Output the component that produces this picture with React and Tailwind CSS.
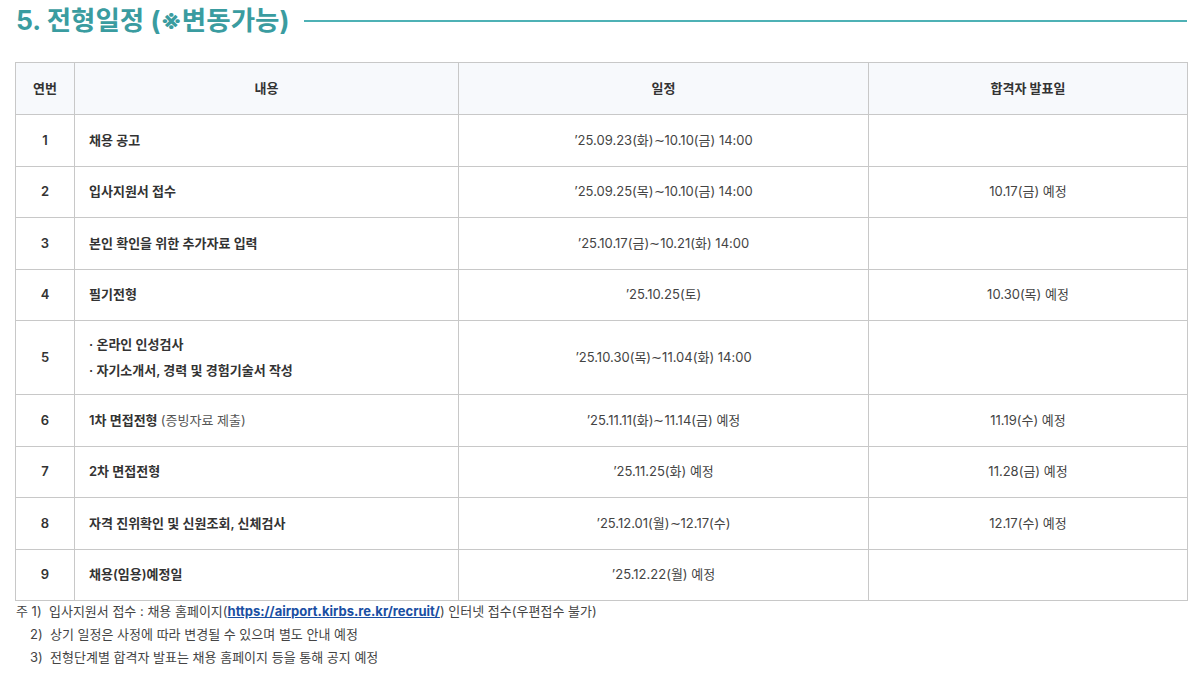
import React from "react";

const rows = [
  { n: "1", c: <>채용 공고</>, d: "’25.09.23(화)∼10.10(금) 14:00", r: "" },
  { n: "2", c: <>입사지원서 접수</>, d: "’25.09.25(목)∼10.10(금) 14:00", r: "10.17(금) 예정" },
  { n: "3", c: <>본인 확인을 위한 추가자료 입력</>, d: "’25.10.17(금)∼10.21(화) 14:00", r: "" },
  { n: "4", c: <>필기전형</>, d: "’25.10.25(토)", r: "10.30(목) 예정" },
  {
    n: "5",
    tall: true,
    c: (
      <div className="flex flex-col gap-[6px]">
        <span>· 온라인 인성검사</span>
        <span>· 자기소개서, 경력 및 경험기술서 작성</span>
      </div>
    ),
    d: "’25.10.30(목)∼11.04(화) 14:00",
    r: "",
  },
  {
    n: "6",
    c: (
      <>
        1차 면접전형 <span className="font-normal text-[#555]">(증빙자료 제출)</span>
      </>
    ),
    d: "’25.11.11(화)∼11.14(금) 예정",
    r: "11.19(수) 예정",
  },
  { n: "7", c: <>2차 면접전형</>, d: "’25.11.25(화) 예정", r: "11.28(금) 예정" },
  { n: "8", c: <>자격 진위확인 및 신원조회, 신체검사</>, d: "’25.12.01(월)∼12.17(수)", r: "12.17(수) 예정" },
  { n: "9", c: <>채용(임용)예정일</>, d: "’25.12.22(월) 예정", r: "" },
];

export default function App() {
  return (
    <div
      className="w-[1192px] h-[678px] bg-white text-[#333] overflow-hidden"
      style={{ fontFamily: "Inter, 'Noto Sans CJK KR', sans-serif" }}
    >
      <div className="flex items-center pl-[16px] pr-[5px] pt-[3px] h-[38px]">
        <h2 className="text-[26.5px] font-bold text-[#3a9ca0] leading-none whitespace-nowrap">
          5. 전형일정 (※변동가능)
        </h2>
        <div className="flex-1 ml-[15px] h-[2px] bg-[#4eb1b5]" />
      </div>
      <div className="pl-[15px] pr-[5px] mt-[24px]">
        <table className="w-[1172px] table-fixed border-collapse text-[13px]">
          <colgroup>
            <col className="w-[59px]" />
            <col className="w-[384px]" />
            <col className="w-[410px]" />
            <col className="w-[319px]" />
          </colgroup>
          <thead>
            <tr className="h-[52px] bg-[#f7f9fc]">
              {["연번", "내용", "일정", "합격자 발표일"].map((h) => (
                <th key={h} className="border border-[#c8c8c8] font-semibold text-[#333] text-center">
                  {h}
                </th>
              ))}
            </tr>
          </thead>
          <tbody>
            {rows.map((row) => (
              <tr key={row.n} className={row.tall ? "h-[74px]" : "h-[51.5px]"}>
                <td className="border border-[#c8c8c8] text-center font-semibold">{row.n}</td>
                <td className="border border-[#c8c8c8] pl-[14px] font-semibold">{row.c}</td>
                <td className="border border-[#c8c8c8] text-center text-[#444]">{row.d}</td>
                <td className="border border-[#c8c8c8] text-center text-[#444]">{row.r}</td>
              </tr>
            ))}
          </tbody>
        </table>
      </div>
      <div className="pl-[16px] -mt-[1px] text-[13px] text-[#444] leading-[23px]">
        <p>
          주 1)&nbsp; 입사지원서 접수 : 채용 홈페이지(
          <a className="font-bold text-[#1a4fa3] underline">https://airport.kirbs.re.kr/recruit/</a>) 인터넷 접수(우편접수 불가)
        </p>
        <p className="pl-[14px]">2)&nbsp; 상기 일정은 사정에 따라 변경될 수 있으며 별도 안내 예정</p>
        <p className="pl-[14px]">3)&nbsp; 전형단계별 합격자 발표는 채용 홈페이지 등을 통해 공지 예정</p>
      </div>
    </div>
  );
}
